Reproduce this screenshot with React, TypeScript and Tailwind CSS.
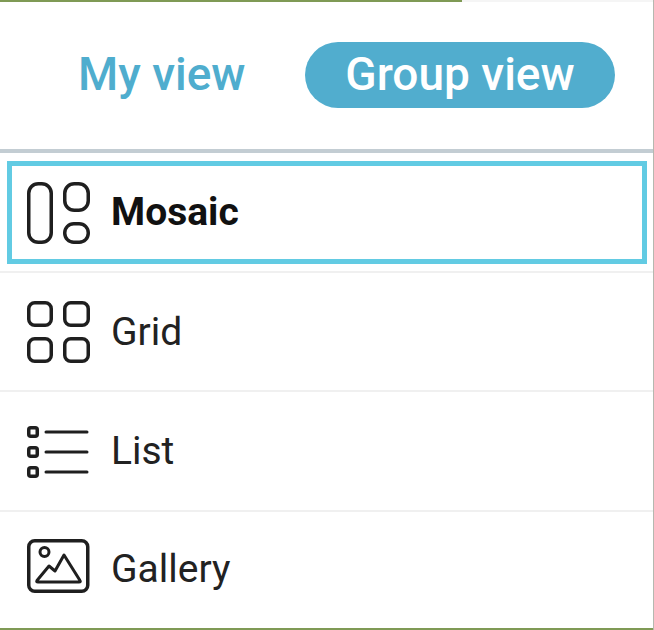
import React from "react";

const MosaicIcon = () => (
  <svg width="63" height="62" viewBox="0 0 63 62" fill="none" stroke="#1f1f1f" strokeWidth="3.5" className="shrink-0">
    <rect x="1.75" y="1.75" width="22.5" height="58.5" rx="9.5" />
    <rect x="37.75" y="1.75" width="23.5" height="26.5" rx="9.5" />
    <rect x="37.75" y="41.75" width="23.5" height="18.5" rx="9" />
  </svg>
);

const GridIcon = () => (
  <svg width="63" height="62" viewBox="0 0 63 62" fill="none" stroke="#1f1f1f" strokeWidth="3.5" className="shrink-0">
    <rect x="1.75" y="1.75" width="22.5" height="22.5" rx="6" />
    <rect x="37.75" y="1.75" width="23.5" height="22.5" rx="6" />
    <rect x="1.75" y="37.75" width="22.5" height="22.5" rx="6" />
    <rect x="37.75" y="37.75" width="23.5" height="22.5" rx="6" />
  </svg>
);

const ListIcon = () => (
  <svg width="63" height="62" viewBox="0 0 63 62" fill="none" stroke="#1f1f1f" strokeWidth="3.5" className="shrink-0">
    <rect x="1.75" y="6.75" width="8.5" height="8.5" rx="2" />
    <rect x="1.75" y="26.75" width="8.5" height="8.5" rx="2" />
    <rect x="1.75" y="46.75" width="8.5" height="8.5" rx="2" />
    <path d="M19 11h41M19 31h41M19 51h41" strokeLinecap="round" strokeWidth="3" />
  </svg>
);

const GalleryIcon = () => (
  <svg width="63" height="62" viewBox="0 0 63 62" fill="none" stroke="#1f1f1f" strokeWidth="3" className="shrink-0">
    <rect x="1.75" y="2.75" width="59" height="50.5" rx="6" strokeWidth="3.5" />
    <circle cx="17.5" cy="14" r="4.5" />
    <path d="M10 42.5 L22 28 L28 33 L37 17 L53 42.5 Q54 44 52 44 H11 Q9 44 10 42.5 Z" strokeLinejoin="round" />
  </svg>
);

const items = [
  { label: "Mosaic", icon: <MosaicIcon />, pad: "pt-2", active: true },
  { label: "Grid", icon: <GridIcon />, pad: "pt-2" },
  { label: "List", icon: <ListIcon />, pad: "pt-2" },
  { label: "Gallery", icon: <GalleryIcon />, pad: "pt-[6px]" },
];

export default function App() {
  return (
    <div className="w-[654px] h-[630px] bg-white flex flex-col overflow-hidden border-r border-r-[#b5b8b0] font-['Roboto',sans-serif]">
      <div className="h-[2px] bg-[#f5f5f5] flex shrink-0">
        <div className="w-[462px] bg-[#7f9a55]" />
      </div>
      <div className="h-[147px] shrink-0 flex items-center pl-[78px] pr-[38px] justify-between pb-[2px]">
        <span className="text-[46px] font-medium text-[#4fadce]">My view</span>
        <span className="w-[310px] h-[66px] rounded-full bg-[#51adce] text-white text-[46px] font-medium flex items-center justify-center">
          Group view
        </span>
      </div>
      <div className="h-[4px] shrink-0 bg-[#c3cdd3]" />
      <ul className="flex-1 min-h-0 flex flex-col">
        {items.map((item) => (
          <li
            key={item.label}
            className={`h-[119.5px] shrink-0 border-b-2 border-[#f0f0f0] px-[7px] last:border-b-0 last:h-[116px] ${item.pad}`}
          >
            <div
              className={`h-[103px] w-[640px] flex items-center gap-[21px] text-[39px] ${
                item.active
                  ? "border-[5px] border-[#62cbe3] font-bold pl-[15px] text-[#111]"
                  : "pl-[20px] text-[#222]"
              }`}
            >
              {item.icon}
              <span>{item.label}</span>
            </div>
          </li>
        ))}
      </ul>
      <div className="h-[2px] shrink-0 bg-[#7f9a55]" />
    </div>
  );
}
